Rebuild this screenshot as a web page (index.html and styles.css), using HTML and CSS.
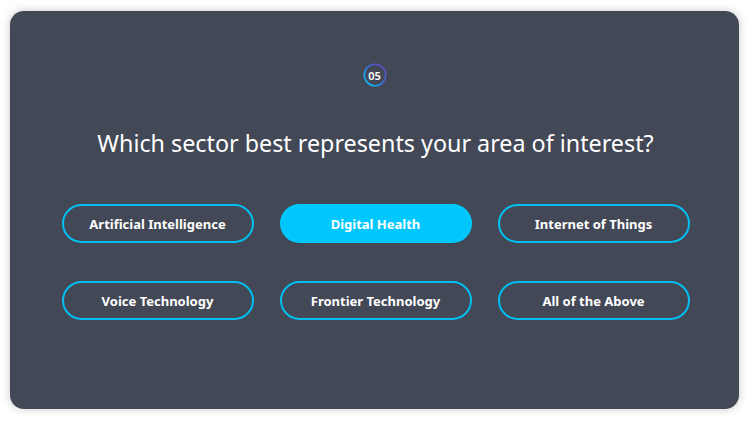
FILE: index.html
```html
<!DOCTYPE html>
<html lang="en">
<head>
<meta charset="utf-8">
<title>Question 05</title>
<link rel="stylesheet" href="styles.css">
</head>
<body>
<main class="card">
  <div class="step">
    <svg class="step-ring" width="24" height="24" viewBox="0 0 24 24" aria-hidden="true">
      <defs>
        <linearGradient id="ring" x1="0" y1="1" x2="1" y2="0">
          <stop offset="0" stop-color="#00d2ff"/>
          <stop offset="0.5" stop-color="#3a6fd8"/>
          <stop offset="1" stop-color="#6b3fb8"/>
        </linearGradient>
      </defs>
      <circle cx="12" cy="12" r="10.7" fill="none" stroke="url(#ring)" stroke-width="1.6"/>
    </svg>
    <span class="step-num">05</span>
  </div>
  <h1 class="question">Which sector best represents your area of interest?</h1>
  <div class="options">
    <button class="option">Artificial Intelligence</button>
    <button class="option selected">Digital Health</button>
    <button class="option">Internet of Things</button>
    <button class="option">Voice Technology</button>
    <button class="option">Frontier Technology</button>
    <button class="option">All of the Above</button>
  </div>
</main>
</body>
</html>
```
FILE: styles.css
```css
* { box-sizing: border-box; }
html, body { margin: 0; padding: 0; }
body {
  background: #ffffff;
  font-family: "Noto Sans", sans-serif;
  padding: 11px 11px 13px 10px;
  width: 750px;
  height: 422px;
}
.card {
  height: 398px;
  background: #424856;
  border-radius: 14px;
  box-shadow: 0 0 10px rgba(0, 0, 0, 0.22);
  display: flex;
  flex-direction: column;
  align-items: center;
  padding-top: 52px;
}
.step {
  position: relative;
  width: 24px;
  height: 24px;
}
.step-ring { display: block; }
.step-num {
  position: absolute;
  inset: 0;
  display: flex;
  align-items: center;
  justify-content: center;
  color: #ffffff;
  font-size: 11px;
  font-weight: 600;
  font-family: "Noto Sans", sans-serif;
}
.question {
  margin: 41px 0 0;
  color: #ffffff;
  font-family: "Noto Sans", sans-serif;
  font-weight: 400;
  font-size: 23.3px;
  line-height: 30px;
  letter-spacing: 0;
  padding-left: 2px;
}
.options {
  margin-top: 46px;
  display: grid;
  grid-template-columns: repeat(3, 192px);
  column-gap: 26px;
  row-gap: 38px;
  margin-left: 2px;
}
.option {
  height: 39px;
  border: 2px solid #00bff0;
  border-radius: 20px;
  background: transparent;
  color: #ffffff;
  font-family: "Noto Sans", sans-serif;
  font-weight: 700;
  font-size: 13px;
  padding: 0;
}
.option.selected {
  background: #00c8ff;
  border-color: #00c8ff;
}
```
